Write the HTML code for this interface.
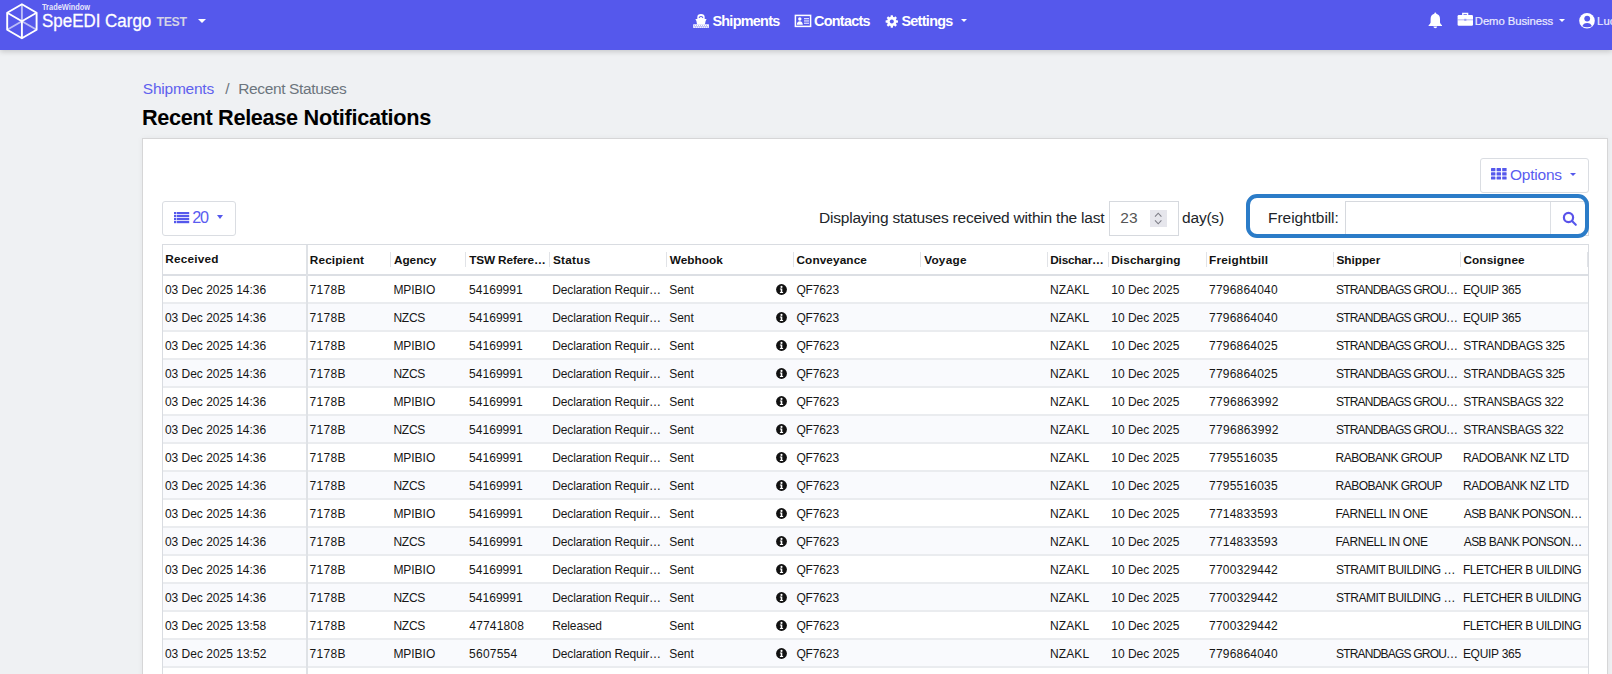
<!DOCTYPE html>
<html><head><meta charset="utf-8"><title>Recent Release Notifications</title>
<style>
*{box-sizing:border-box;margin:0;padding:0}
html,body{width:1612px;height:674px;overflow:hidden}
body{background:#eff1f3;font-family:"Liberation Sans",sans-serif;color:#212529;position:relative}
.abs{position:absolute;white-space:nowrap}
.tx{position:absolute;white-space:nowrap;line-height:1}
#nav{position:absolute;left:0;top:0;width:1612px;height:49.5px;background:#5558ec;box-shadow:0 2px 5px rgba(0,0,0,.16)}
.caret{position:absolute;width:0;height:0;border-left:4px solid transparent;border-right:4px solid transparent;border-top:4.5px solid #fff}
#card{position:absolute;left:142px;top:138px;width:1466px;height:600px;background:#fff;border:1px solid #d6d6d7;box-shadow:0 0 6px rgba(0,0,0,.05)}
.btn{position:absolute;border:1px solid #dadde2;border-radius:4px;background:#fff}
.row{position:absolute;left:162px;width:1427px;height:28px}
.rline{position:absolute;left:162px;width:1427px;height:2px;background:#eaecef}
.hdrline{position:absolute;left:162px;top:274px;width:1427px;height:2px;background:#dcdfe4}
.rs{position:absolute;top:252px;width:1px;height:15px;background:#e1e3e7}
.fzline{position:absolute;left:306px;top:244px;width:2px;height:440px;background:#dfe2e6}
.tblborder{position:absolute;left:162px;top:244px;width:1427px;height:460px;border:1px solid #d9dce1}
.info{position:absolute;left:775.6px;display:block}
</style></head><body>
<div id="nav"></div>
<svg class="abs" style="left:0;top:0" width="44" height="44" viewBox="0 0 44 44">
  <g fill="none" stroke="#fff" stroke-width="1.9" stroke-linejoin="round">
    <path d="M21.9 4.3 L36.6 12.8 L36.6 29.8 L21.9 38.3 L7.2 29.8 L7.2 12.8 Z"/>
    <path d="M21.9 21.3 L7.2 12.8 M21.9 21.3 L36.6 12.8 M21.9 21.3 L21.9 38.3"/>
    <path d="M21.9 21.3 L21.9 4.3 M21.9 21.3 L7.2 29.8 M21.9 21.3 L36.6 29.8" stroke-opacity=".6"/>
  </g>
</svg>
<div class="caret" style="left:198.2px;top:19.3px"></div>
<!-- ship icon -->
<svg class="abs" style="left:688px;top:9px" width="26" height="22" viewBox="0 0 26 22">
  <path fill="#fff" d="M9.3 10.2 L9.3 8 Q9.3 4.9 13 4.9 Q16.7 4.9 16.7 8 L16.7 10.2 Z"/>
  <path fill="#5558ec" d="M10.6 9 Q10.8 6.9 13 6.9 Q15.2 6.9 15.4 9 L14.4 9 Q14.2 7.9 13 7.9 Q11.8 7.9 11.6 9 Z"/>
  <path fill="#fff" d="M7.4 10 L18.6 10 L17.6 12 L16.9 15.4 L9.1 15.4 L8.4 12 Z"/>
  <rect x="5.2" y="15.3" width="15.7" height="3.6" fill="#fff"/>
  <g fill="#8f90f2">
    <rect x="6" y="16.4" width="1" height="1"/><rect x="8" y="16.4" width="1" height="1"/><rect x="10" y="16.4" width="1" height="1"/><rect x="12" y="16.4" width="1" height="1"/><rect x="14" y="16.4" width="1" height="1"/><rect x="16" y="16.4" width="1" height="1"/><rect x="18" y="16.4" width="1" height="1"/>
    <rect x="7" y="17.4" width="1" height="1"/><rect x="9" y="17.4" width="1" height="1"/><rect x="11" y="17.4" width="1" height="1"/><rect x="13" y="17.4" width="1" height="1"/><rect x="15" y="17.4" width="1" height="1"/><rect x="17" y="17.4" width="1" height="1"/><rect x="19" y="17.4" width="1" height="1"/>
  </g>
</svg>
<!-- contacts icon -->
<svg class="abs" style="left:794px;top:14px" width="18" height="14" viewBox="0 0 18 14">
  <rect x="1.4" y="1.4" width="15.2" height="11" fill="none" stroke="#fff" stroke-width="1.5"/>
  <circle cx="5.8" cy="5" r="1.7" fill="#fff"/>
  <path d="M2.8 10.8 Q3 7.2 5.8 7.2 Q8.6 7.2 8.8 10.8 Z" fill="#fff"/>
  <rect x="10" y="4" width="5" height="1.3" fill="#dcdcff"/>
  <rect x="10" y="6.3" width="5" height="1.3" fill="#dcdcff"/>
  <rect x="10" y="8.6" width="5" height="1.3" fill="#dcdcff"/>
</svg>
<!-- gear -->
<svg class="abs" style="left:885px;top:14.5px" width="14" height="14" viewBox="0 0 14 14">
  <g fill="#fff" transform="translate(6.8 6.5)">
    <rect x="-1.2" y="-6.2" width="2.4" height="12.4" rx=".4"/>
    <rect x="-1.2" y="-6.2" width="2.4" height="12.4" rx=".4" transform="rotate(45)"/>
    <rect x="-1.2" y="-6.2" width="2.4" height="12.4" rx=".4" transform="rotate(90)"/>
    <rect x="-1.2" y="-6.2" width="2.4" height="12.4" rx=".4" transform="rotate(135)"/>
    <circle r="4.7"/>
  </g>
  <circle cx="6.8" cy="6.5" r="2" fill="#5558ec"/>
</svg>
<div class="caret" style="left:960.5px;top:18.6px;border-left-width:3.3px;border-right-width:3.3px;border-top-width:3.8px"></div>
<!-- bell -->
<svg class="abs" style="left:1427px;top:11.5px" width="17" height="17" viewBox="0 0 17 17">
  <path fill="#fff" d="M8.3 0.6 Q9.3 0.6 9.3 1.8 Q13 2.6 13 7 L13 10.5 Q13.4 12 15 13.2 L15 14 L1.6 14 L1.6 13.2 Q3.2 12 3.6 10.5 L3.6 7 Q3.6 2.6 7.3 1.8 Q7.3 0.6 8.3 0.6 Z"/>
  <path fill="#fff" d="M6.4 14.6 L10.2 14.6 Q10 16.2 8.3 16.2 Q6.6 16.2 6.4 14.6 Z"/>
</svg>
<!-- briefcase -->
<svg class="abs" style="left:1457px;top:11.8px" width="17" height="15" viewBox="0 0 17 15">
  <path fill="none" stroke="#fff" stroke-width="1.4" d="M5.8 3.2 L5.8 1.5 L10.6 1.5 L10.6 3.2"/>
  <rect x="0.6" y="3" width="15.4" height="10.8" rx="1.2" fill="#fff"/>
  <rect x="0.6" y="7.4" width="15.4" height="0.9" fill="#5558ec" opacity=".5"/>
  <rect x="7.2" y="6.8" width="2.2" height="2" fill="#9a9cf3"/>
</svg>
<div class="caret" style="left:1558.5px;top:18.5px;border-left-width:3px;border-right-width:3px;border-top-width:3px"></div>
<!-- user circle -->
<svg class="abs" style="left:1578px;top:12px" width="18" height="18" viewBox="0 0 18 18">
  <circle cx="9" cy="8.7" r="7.8" fill="#fff"/>
  <circle cx="9.2" cy="6.6" r="2.9" fill="#5558ec"/>
  <path d="M4.3 14.3 Q5.4 10.9 9.1 10.9 Q12.8 10.9 13.9 14.3 Q11.9 15.3 9.1 15.3 Q6.3 15.3 4.3 14.3 Z" fill="#5558ec"/>
</svg>

<div id="card"></div>
<!-- options button -->
<div class="btn" style="left:1479.5px;top:158px;width:109px;height:34.5px;border-radius:3px"></div>
<svg class="abs" style="left:1491px;top:168px" width="16" height="12" viewBox="0 0 16 12">
  <g fill="#5558ec">
    <rect x="0" y="0" width="4.4" height="3.2" rx=".5"/><rect x="5.6" y="0" width="4.4" height="3.2" rx=".5"/><rect x="11.2" y="0" width="4.4" height="3.2" rx=".5"/>
    <rect x="0" y="4.2" width="4.4" height="3.2" rx=".5"/><rect x="5.6" y="4.2" width="4.4" height="3.2" rx=".5"/><rect x="11.2" y="4.2" width="4.4" height="3.2" rx=".5"/>
    <rect x="0" y="8.4" width="4.4" height="3.2" rx=".5"/><rect x="5.6" y="8.4" width="4.4" height="3.2" rx=".5"/><rect x="11.2" y="8.4" width="4.4" height="3.2" rx=".5"/>
  </g>
</svg>
<div class="caret" style="left:1569.6px;top:172.6px;border-left-width:3.3px;border-right-width:3.3px;border-top-width:3.8px;border-top-color:#5558ec"></div>
<!-- page size button -->
<div class="btn" style="left:162px;top:201px;width:74px;height:34.5px;border-radius:3px"></div>
<svg class="abs" style="left:173.5px;top:212px" width="16" height="12" viewBox="0 0 16 12">
  <g fill="#5558ec">
    <rect x="0" y="0" width="2" height="2.2"/><rect x="2.6" y="0" width="12.6" height="2.2"/>
    <rect x="0" y="3" width="2" height="2.2"/><rect x="2.6" y="3" width="12.6" height="2.2"/>
    <rect x="0" y="6" width="2" height="2.2"/><rect x="2.6" y="6" width="12.6" height="2.2"/>
    <rect x="0" y="9" width="2" height="2.2"/><rect x="2.6" y="9" width="12.6" height="2.2"/>
  </g>
</svg>
<div class="caret" style="left:217px;top:215.3px;border-left-width:3.4px;border-right-width:3.4px;border-top-width:4px;border-top-color:#5558ec"></div>
<!-- days input -->
<div class="abs" style="left:1109px;top:201px;width:70px;height:34.5px;border:1px solid #d6d9de;background:#fff"></div>
<div class="abs" style="left:1150px;top:210px;width:16.5px;height:16.5px;background:#e6e6ec"></div>
<svg class="abs" style="left:1150px;top:210px" width="17" height="17" viewBox="0 0 17 17">
  <path d="M5 6.6 L8.2 3.2 L11.4 6.6 M5 10.4 L8.2 13.8 L11.4 10.4" fill="none" stroke="#7d7d86" stroke-width="1.1"/>
</svg>
<!-- freightbill group -->
<div class="abs" style="left:1345px;top:201px;width:243.5px;height:34.5px;border:1px solid #d6d9de;background:#fff"></div>
<div class="abs" style="left:1550px;top:202px;width:1px;height:32px;background:#dcdfe4"></div>
<svg class="abs" style="left:1562px;top:210.5px" width="16" height="16" viewBox="0 0 16 16">
  <circle cx="6.5" cy="6.5" r="4.6" fill="none" stroke="#5a52ea" stroke-width="2.2"/>
  <path d="M10 10 L13.8 13.8" stroke="#5558ec" stroke-width="2.1" stroke-linecap="round"/>
</svg>
<div class="abs" style="left:1246px;top:194px;width:343px;height:44px;border:4px solid #2b7cc8;border-radius:11px"></div>

<div id="tbl">
<div class="row" style="top:304px;background:#f9fafd"></div>
<div class="row" style="top:360px;background:#f9fafd"></div>
<div class="row" style="top:416px;background:#f9fafd"></div>
<div class="row" style="top:472px;background:#f9fafd"></div>
<div class="row" style="top:528px;background:#f9fafd"></div>
<div class="row" style="top:584px;background:#f9fafd"></div>
<div class="row" style="top:640px;background:#f9fafd"></div>
<div class="rline" style="top:302px"></div>
<div class="rline" style="top:330px"></div>
<div class="rline" style="top:358px"></div>
<div class="rline" style="top:386px"></div>
<div class="rline" style="top:414px"></div>
<div class="rline" style="top:442px"></div>
<div class="rline" style="top:470px"></div>
<div class="rline" style="top:498px"></div>
<div class="rline" style="top:526px"></div>
<div class="rline" style="top:554px"></div>
<div class="rline" style="top:582px"></div>
<div class="rline" style="top:610px"></div>
<div class="rline" style="top:638px"></div>
<div class="rline" style="top:666px"></div>
<div class="rline" style="top:694px"></div>
<div class="hdrline"></div>
<div class="rs" style="left:306px"></div>
<div class="rs" style="left:390px"></div>
<div class="rs" style="left:465px"></div>
<div class="rs" style="left:549px"></div>
<div class="rs" style="left:666px"></div>
<div class="rs" style="left:793px"></div>
<div class="rs" style="left:920px"></div>
<div class="rs" style="left:1047px"></div>
<div class="rs" style="left:1108px"></div>
<div class="rs" style="left:1206px"></div>
<div class="rs" style="left:1333px"></div>
<div class="rs" style="left:1460px"></div>
<div class="rs" style="left:1587px"></div>
<div class="fzline"></div>
<div class="tblborder"></div>
<svg class="info" style="top:284px" width="11" height="11" viewBox="0 0 11 11"><circle cx="5.5" cy="5.5" r="5.4" fill="#111"/><path d="M3.9 4.5 H6.3 V7.9 H7.1 V9 H3.9 V7.9 H4.7 V5.6 H3.9 Z" fill="#fff"/><circle cx="5.5" cy="2.9" r="1.05" fill="#fff"/></svg>
<svg class="info" style="top:312px" width="11" height="11" viewBox="0 0 11 11"><circle cx="5.5" cy="5.5" r="5.4" fill="#111"/><path d="M3.9 4.5 H6.3 V7.9 H7.1 V9 H3.9 V7.9 H4.7 V5.6 H3.9 Z" fill="#fff"/><circle cx="5.5" cy="2.9" r="1.05" fill="#fff"/></svg>
<svg class="info" style="top:340px" width="11" height="11" viewBox="0 0 11 11"><circle cx="5.5" cy="5.5" r="5.4" fill="#111"/><path d="M3.9 4.5 H6.3 V7.9 H7.1 V9 H3.9 V7.9 H4.7 V5.6 H3.9 Z" fill="#fff"/><circle cx="5.5" cy="2.9" r="1.05" fill="#fff"/></svg>
<svg class="info" style="top:368px" width="11" height="11" viewBox="0 0 11 11"><circle cx="5.5" cy="5.5" r="5.4" fill="#111"/><path d="M3.9 4.5 H6.3 V7.9 H7.1 V9 H3.9 V7.9 H4.7 V5.6 H3.9 Z" fill="#fff"/><circle cx="5.5" cy="2.9" r="1.05" fill="#fff"/></svg>
<svg class="info" style="top:396px" width="11" height="11" viewBox="0 0 11 11"><circle cx="5.5" cy="5.5" r="5.4" fill="#111"/><path d="M3.9 4.5 H6.3 V7.9 H7.1 V9 H3.9 V7.9 H4.7 V5.6 H3.9 Z" fill="#fff"/><circle cx="5.5" cy="2.9" r="1.05" fill="#fff"/></svg>
<svg class="info" style="top:424px" width="11" height="11" viewBox="0 0 11 11"><circle cx="5.5" cy="5.5" r="5.4" fill="#111"/><path d="M3.9 4.5 H6.3 V7.9 H7.1 V9 H3.9 V7.9 H4.7 V5.6 H3.9 Z" fill="#fff"/><circle cx="5.5" cy="2.9" r="1.05" fill="#fff"/></svg>
<svg class="info" style="top:452px" width="11" height="11" viewBox="0 0 11 11"><circle cx="5.5" cy="5.5" r="5.4" fill="#111"/><path d="M3.9 4.5 H6.3 V7.9 H7.1 V9 H3.9 V7.9 H4.7 V5.6 H3.9 Z" fill="#fff"/><circle cx="5.5" cy="2.9" r="1.05" fill="#fff"/></svg>
<svg class="info" style="top:480px" width="11" height="11" viewBox="0 0 11 11"><circle cx="5.5" cy="5.5" r="5.4" fill="#111"/><path d="M3.9 4.5 H6.3 V7.9 H7.1 V9 H3.9 V7.9 H4.7 V5.6 H3.9 Z" fill="#fff"/><circle cx="5.5" cy="2.9" r="1.05" fill="#fff"/></svg>
<svg class="info" style="top:508px" width="11" height="11" viewBox="0 0 11 11"><circle cx="5.5" cy="5.5" r="5.4" fill="#111"/><path d="M3.9 4.5 H6.3 V7.9 H7.1 V9 H3.9 V7.9 H4.7 V5.6 H3.9 Z" fill="#fff"/><circle cx="5.5" cy="2.9" r="1.05" fill="#fff"/></svg>
<svg class="info" style="top:536px" width="11" height="11" viewBox="0 0 11 11"><circle cx="5.5" cy="5.5" r="5.4" fill="#111"/><path d="M3.9 4.5 H6.3 V7.9 H7.1 V9 H3.9 V7.9 H4.7 V5.6 H3.9 Z" fill="#fff"/><circle cx="5.5" cy="2.9" r="1.05" fill="#fff"/></svg>
<svg class="info" style="top:564px" width="11" height="11" viewBox="0 0 11 11"><circle cx="5.5" cy="5.5" r="5.4" fill="#111"/><path d="M3.9 4.5 H6.3 V7.9 H7.1 V9 H3.9 V7.9 H4.7 V5.6 H3.9 Z" fill="#fff"/><circle cx="5.5" cy="2.9" r="1.05" fill="#fff"/></svg>
<svg class="info" style="top:592px" width="11" height="11" viewBox="0 0 11 11"><circle cx="5.5" cy="5.5" r="5.4" fill="#111"/><path d="M3.9 4.5 H6.3 V7.9 H7.1 V9 H3.9 V7.9 H4.7 V5.6 H3.9 Z" fill="#fff"/><circle cx="5.5" cy="2.9" r="1.05" fill="#fff"/></svg>
<svg class="info" style="top:620px" width="11" height="11" viewBox="0 0 11 11"><circle cx="5.5" cy="5.5" r="5.4" fill="#111"/><path d="M3.9 4.5 H6.3 V7.9 H7.1 V9 H3.9 V7.9 H4.7 V5.6 H3.9 Z" fill="#fff"/><circle cx="5.5" cy="2.9" r="1.05" fill="#fff"/></svg>
<svg class="info" style="top:648px" width="11" height="11" viewBox="0 0 11 11"><circle cx="5.5" cy="5.5" r="5.4" fill="#111"/><path d="M3.9 4.5 H6.3 V7.9 H7.1 V9 H3.9 V7.9 H4.7 V5.6 H3.9 Z" fill="#fff"/><circle cx="5.5" cy="2.9" r="1.05" fill="#fff"/></svg>
<svg class="info" style="top:676px" width="11" height="11" viewBox="0 0 11 11"><circle cx="5.5" cy="5.5" r="5.4" fill="#111"/><path d="M3.9 4.5 H6.3 V7.9 H7.1 V9 H3.9 V7.9 H4.7 V5.6 H3.9 Z" fill="#fff"/><circle cx="5.5" cy="2.9" r="1.05" fill="#fff"/></svg>
</div>
<div class="tx" style="left:42.40px;top:3px;font-size:8.3px;font-weight:700;transform:scaleX(0.8939);transform-origin:-0.00px 0;color:#e6e6fb;">TradeWindow</div>
<div class="tx" style="left:41.60px;top:12px;font-size:18.5px;transform:scaleX(0.9152);transform-origin:0.80px 0;color:#fff;-webkit-text-stroke:.3px #fff;">SpeEDI Cargo</div>
<div class="tx" style="left:156.50px;top:16px;font-size:12.4px;font-weight:700;letter-spacing:-0.405px;color:#d3d3e6;">TEST</div>
<div class="tx" style="left:712.40px;top:14px;font-size:14.4px;font-weight:700;letter-spacing:-0.713px;color:#fff;">Shipments</div>
<div class="tx" style="left:814.10px;top:14px;font-size:14.4px;font-weight:700;letter-spacing:-0.743px;color:#fff;">Contacts</div>
<div class="tx" style="left:901.40px;top:14px;font-size:14.4px;font-weight:700;letter-spacing:-0.685px;color:#fff;">Settings</div>
<div class="tx" style="left:1474.80px;top:16px;font-size:11.3px;letter-spacing:-0.065px;color:#ecebff;-webkit-text-stroke:.2px #ecebff;">Demo Business</div>
<div class="tx" style="left:1597.10px;top:16px;font-size:11.3px;color:#ecebff;-webkit-text-stroke:.2px #ecebff;">Lucas</div>
<div class="tx" style="left:142.80px;top:81px;font-size:15.5px;letter-spacing:-0.235px;color:#5f61ee;">Shipments</div>
<div class="tx" style="left:225.30px;top:81px;font-size:15.5px;color:#6c757d;">/</div>
<div class="tx" style="left:238.30px;top:81px;font-size:15.5px;letter-spacing:-0.370px;color:#6c757d;">Recent Statuses</div>
<div class="tx" style="left:141.90px;top:107px;font-size:21.7px;font-weight:700;letter-spacing:-0.311px;color:#000;">Recent Release Notifications</div>
<div class="tx" style="left:1510.00px;top:167px;font-size:15.5px;letter-spacing:-0.228px;color:#5a5cf0;">Options</div>
<div class="tx" style="left:192.20px;top:209px;font-size:16.2px;letter-spacing:-1.210px;color:#5a5cf0;">20</div>
<div class="tx" style="left:819.00px;top:210px;font-size:15.5px;letter-spacing:-0.212px;color:#212529;">Displaying statuses received within the last</div>
<div class="tx" style="left:1120.20px;top:210px;font-size:15.5px;letter-spacing:0.280px;color:#555;">23</div>
<div class="tx" style="left:1182.10px;top:210px;font-size:15.5px;letter-spacing:-0.220px;color:#212529;">day(s)</div>
<div class="tx" style="left:1268.10px;top:210px;font-size:15.5px;letter-spacing:-0.072px;color:#212529;">Freightbill:</div>
<div class="tx" style="left:165.30px;top:254px;font-size:11.8px;font-weight:700;letter-spacing:0.184px;color:#111;">Received</div>
<div class="tx" style="left:309.80px;top:255px;font-size:11.8px;font-weight:700;letter-spacing:0.127px;color:#111;">Recipient</div>
<div class="tx" style="left:394.00px;top:255px;font-size:11.8px;font-weight:700;letter-spacing:-0.053px;color:#111;">Agency</div>
<div class="tx" style="left:469.20px;top:255px;font-size:11.8px;font-weight:700;letter-spacing:-0.143px;color:#111;">TSW Refere…</div>
<div class="tx" style="left:553.00px;top:255px;font-size:11.8px;font-weight:700;letter-spacing:0.240px;color:#111;">Status</div>
<div class="tx" style="left:669.80px;top:255px;font-size:11.8px;font-weight:700;letter-spacing:0.014px;color:#111;">Webhook</div>
<div class="tx" style="left:796.50px;top:255px;font-size:11.8px;font-weight:700;letter-spacing:0.094px;color:#111;">Conveyance</div>
<div class="tx" style="left:924.20px;top:255px;font-size:11.8px;font-weight:700;letter-spacing:0.233px;color:#111;">Voyage</div>
<div class="tx" style="left:1050.30px;top:255px;font-size:11.8px;font-weight:700;letter-spacing:-0.213px;color:#111;">Dischar…</div>
<div class="tx" style="left:1111.20px;top:255px;font-size:11.8px;font-weight:700;letter-spacing:0.112px;color:#111;">Discharging</div>
<div class="tx" style="left:1209.10px;top:255px;font-size:11.8px;font-weight:700;letter-spacing:0.195px;color:#111;">Freightbill</div>
<div class="tx" style="left:1336.40px;top:255px;font-size:11.8px;font-weight:700;letter-spacing:-0.006px;color:#111;">Shipper</div>
<div class="tx" style="left:1463.40px;top:255px;font-size:11.8px;font-weight:700;letter-spacing:0.118px;color:#111;">Consignee</div>
<div class="tx" style="left:164.90px;top:284px;font-size:12.0px;letter-spacing:-0.009px;color:#161616;">03 Dec 2025 14:36</div>
<div class="tx" style="left:309.60px;top:284px;font-size:12.0px;letter-spacing:0.326px;color:#161616;">7178B</div>
<div class="tx" style="left:393.40px;top:284px;font-size:12.0px;letter-spacing:-0.034px;color:#161616;">MPIBIO</div>
<div class="tx" style="left:469.10px;top:284px;font-size:12.0px;letter-spacing:0.026px;color:#161616;">54169991</div>
<div class="tx" style="left:552.30px;top:284px;font-size:12.0px;letter-spacing:-0.149px;color:#161616;">Declaration Requir…</div>
<div class="tx" style="left:669.20px;top:284px;font-size:12.0px;letter-spacing:-0.017px;color:#161616;">Sent</div>
<div class="tx" style="left:796.40px;top:284px;font-size:12.0px;letter-spacing:-0.137px;color:#161616;">QF7623</div>
<div class="tx" style="left:1050.00px;top:284px;font-size:12.0px;letter-spacing:0.099px;color:#161616;">NZAKL</div>
<div class="tx" style="left:1111.20px;top:284px;font-size:12.0px;letter-spacing:0.022px;color:#161616;">10 Dec 2025</div>
<div class="tx" style="left:1209.10px;top:284px;font-size:12.0px;letter-spacing:0.193px;color:#161616;">7796864040</div>
<div class="tx" style="left:1336.00px;top:284px;font-size:12.0px;letter-spacing:-0.794px;color:#161616;">STRANDBAGS GROU…</div>
<div class="tx" style="left:1462.90px;top:284px;font-size:12.0px;letter-spacing:-0.278px;color:#161616;">EQUIP 365</div>
<div class="tx" style="left:164.90px;top:312px;font-size:12.0px;letter-spacing:-0.009px;color:#161616;">03 Dec 2025 14:36</div>
<div class="tx" style="left:309.60px;top:312px;font-size:12.0px;letter-spacing:0.326px;color:#161616;">7178B</div>
<div class="tx" style="left:393.40px;top:312px;font-size:12.0px;letter-spacing:-0.254px;color:#161616;">NZCS</div>
<div class="tx" style="left:469.10px;top:312px;font-size:12.0px;letter-spacing:0.026px;color:#161616;">54169991</div>
<div class="tx" style="left:552.30px;top:312px;font-size:12.0px;letter-spacing:-0.149px;color:#161616;">Declaration Requir…</div>
<div class="tx" style="left:669.20px;top:312px;font-size:12.0px;letter-spacing:-0.017px;color:#161616;">Sent</div>
<div class="tx" style="left:796.40px;top:312px;font-size:12.0px;letter-spacing:-0.137px;color:#161616;">QF7623</div>
<div class="tx" style="left:1050.00px;top:312px;font-size:12.0px;letter-spacing:0.099px;color:#161616;">NZAKL</div>
<div class="tx" style="left:1111.20px;top:312px;font-size:12.0px;letter-spacing:0.022px;color:#161616;">10 Dec 2025</div>
<div class="tx" style="left:1209.10px;top:312px;font-size:12.0px;letter-spacing:0.193px;color:#161616;">7796864040</div>
<div class="tx" style="left:1336.00px;top:312px;font-size:12.0px;letter-spacing:-0.794px;color:#161616;">STRANDBAGS GROU…</div>
<div class="tx" style="left:1462.90px;top:312px;font-size:12.0px;letter-spacing:-0.278px;color:#161616;">EQUIP 365</div>
<div class="tx" style="left:164.90px;top:340px;font-size:12.0px;letter-spacing:-0.009px;color:#161616;">03 Dec 2025 14:36</div>
<div class="tx" style="left:309.60px;top:340px;font-size:12.0px;letter-spacing:0.326px;color:#161616;">7178B</div>
<div class="tx" style="left:393.40px;top:340px;font-size:12.0px;letter-spacing:-0.034px;color:#161616;">MPIBIO</div>
<div class="tx" style="left:469.10px;top:340px;font-size:12.0px;letter-spacing:0.026px;color:#161616;">54169991</div>
<div class="tx" style="left:552.30px;top:340px;font-size:12.0px;letter-spacing:-0.149px;color:#161616;">Declaration Requir…</div>
<div class="tx" style="left:669.20px;top:340px;font-size:12.0px;letter-spacing:-0.017px;color:#161616;">Sent</div>
<div class="tx" style="left:796.40px;top:340px;font-size:12.0px;letter-spacing:-0.137px;color:#161616;">QF7623</div>
<div class="tx" style="left:1050.00px;top:340px;font-size:12.0px;letter-spacing:0.099px;color:#161616;">NZAKL</div>
<div class="tx" style="left:1111.20px;top:340px;font-size:12.0px;letter-spacing:0.022px;color:#161616;">10 Dec 2025</div>
<div class="tx" style="left:1209.10px;top:340px;font-size:12.0px;letter-spacing:0.204px;color:#161616;">7796864025</div>
<div class="tx" style="left:1336.00px;top:340px;font-size:12.0px;letter-spacing:-0.794px;color:#161616;">STRANDBAGS GROU…</div>
<div class="tx" style="left:1463.30px;top:340px;font-size:12.0px;letter-spacing:-0.336px;color:#161616;">STRANDBAGS 325</div>
<div class="tx" style="left:164.90px;top:368px;font-size:12.0px;letter-spacing:-0.009px;color:#161616;">03 Dec 2025 14:36</div>
<div class="tx" style="left:309.60px;top:368px;font-size:12.0px;letter-spacing:0.326px;color:#161616;">7178B</div>
<div class="tx" style="left:393.40px;top:368px;font-size:12.0px;letter-spacing:-0.254px;color:#161616;">NZCS</div>
<div class="tx" style="left:469.10px;top:368px;font-size:12.0px;letter-spacing:0.026px;color:#161616;">54169991</div>
<div class="tx" style="left:552.30px;top:368px;font-size:12.0px;letter-spacing:-0.149px;color:#161616;">Declaration Requir…</div>
<div class="tx" style="left:669.20px;top:368px;font-size:12.0px;letter-spacing:-0.017px;color:#161616;">Sent</div>
<div class="tx" style="left:796.40px;top:368px;font-size:12.0px;letter-spacing:-0.137px;color:#161616;">QF7623</div>
<div class="tx" style="left:1050.00px;top:368px;font-size:12.0px;letter-spacing:0.099px;color:#161616;">NZAKL</div>
<div class="tx" style="left:1111.20px;top:368px;font-size:12.0px;letter-spacing:0.022px;color:#161616;">10 Dec 2025</div>
<div class="tx" style="left:1209.10px;top:368px;font-size:12.0px;letter-spacing:0.204px;color:#161616;">7796864025</div>
<div class="tx" style="left:1336.00px;top:368px;font-size:12.0px;letter-spacing:-0.794px;color:#161616;">STRANDBAGS GROU…</div>
<div class="tx" style="left:1463.30px;top:368px;font-size:12.0px;letter-spacing:-0.336px;color:#161616;">STRANDBAGS 325</div>
<div class="tx" style="left:164.90px;top:396px;font-size:12.0px;letter-spacing:-0.009px;color:#161616;">03 Dec 2025 14:36</div>
<div class="tx" style="left:309.60px;top:396px;font-size:12.0px;letter-spacing:0.326px;color:#161616;">7178B</div>
<div class="tx" style="left:393.40px;top:396px;font-size:12.0px;letter-spacing:-0.034px;color:#161616;">MPIBIO</div>
<div class="tx" style="left:469.10px;top:396px;font-size:12.0px;letter-spacing:0.026px;color:#161616;">54169991</div>
<div class="tx" style="left:552.30px;top:396px;font-size:12.0px;letter-spacing:-0.149px;color:#161616;">Declaration Requir…</div>
<div class="tx" style="left:669.20px;top:396px;font-size:12.0px;letter-spacing:-0.017px;color:#161616;">Sent</div>
<div class="tx" style="left:796.40px;top:396px;font-size:12.0px;letter-spacing:-0.137px;color:#161616;">QF7623</div>
<div class="tx" style="left:1050.00px;top:396px;font-size:12.0px;letter-spacing:0.099px;color:#161616;">NZAKL</div>
<div class="tx" style="left:1111.20px;top:396px;font-size:12.0px;letter-spacing:0.022px;color:#161616;">10 Dec 2025</div>
<div class="tx" style="left:1209.10px;top:396px;font-size:12.0px;letter-spacing:0.282px;color:#161616;">7796863992</div>
<div class="tx" style="left:1336.00px;top:396px;font-size:12.0px;letter-spacing:-0.794px;color:#161616;">STRANDBAGS GROU…</div>
<div class="tx" style="left:1463.30px;top:396px;font-size:12.0px;letter-spacing:-0.385px;color:#161616;">STRANSBAGS 322</div>
<div class="tx" style="left:164.90px;top:424px;font-size:12.0px;letter-spacing:-0.009px;color:#161616;">03 Dec 2025 14:36</div>
<div class="tx" style="left:309.60px;top:424px;font-size:12.0px;letter-spacing:0.326px;color:#161616;">7178B</div>
<div class="tx" style="left:393.40px;top:424px;font-size:12.0px;letter-spacing:-0.254px;color:#161616;">NZCS</div>
<div class="tx" style="left:469.10px;top:424px;font-size:12.0px;letter-spacing:0.026px;color:#161616;">54169991</div>
<div class="tx" style="left:552.30px;top:424px;font-size:12.0px;letter-spacing:-0.149px;color:#161616;">Declaration Requir…</div>
<div class="tx" style="left:669.20px;top:424px;font-size:12.0px;letter-spacing:-0.017px;color:#161616;">Sent</div>
<div class="tx" style="left:796.40px;top:424px;font-size:12.0px;letter-spacing:-0.137px;color:#161616;">QF7623</div>
<div class="tx" style="left:1050.00px;top:424px;font-size:12.0px;letter-spacing:0.099px;color:#161616;">NZAKL</div>
<div class="tx" style="left:1111.20px;top:424px;font-size:12.0px;letter-spacing:0.022px;color:#161616;">10 Dec 2025</div>
<div class="tx" style="left:1209.10px;top:424px;font-size:12.0px;letter-spacing:0.282px;color:#161616;">7796863992</div>
<div class="tx" style="left:1336.00px;top:424px;font-size:12.0px;letter-spacing:-0.794px;color:#161616;">STRANDBAGS GROU…</div>
<div class="tx" style="left:1463.30px;top:424px;font-size:12.0px;letter-spacing:-0.385px;color:#161616;">STRANSBAGS 322</div>
<div class="tx" style="left:164.90px;top:452px;font-size:12.0px;letter-spacing:-0.009px;color:#161616;">03 Dec 2025 14:36</div>
<div class="tx" style="left:309.60px;top:452px;font-size:12.0px;letter-spacing:0.326px;color:#161616;">7178B</div>
<div class="tx" style="left:393.40px;top:452px;font-size:12.0px;letter-spacing:-0.034px;color:#161616;">MPIBIO</div>
<div class="tx" style="left:469.10px;top:452px;font-size:12.0px;letter-spacing:0.026px;color:#161616;">54169991</div>
<div class="tx" style="left:552.30px;top:452px;font-size:12.0px;letter-spacing:-0.149px;color:#161616;">Declaration Requir…</div>
<div class="tx" style="left:669.20px;top:452px;font-size:12.0px;letter-spacing:-0.017px;color:#161616;">Sent</div>
<div class="tx" style="left:796.40px;top:452px;font-size:12.0px;letter-spacing:-0.137px;color:#161616;">QF7623</div>
<div class="tx" style="left:1050.00px;top:452px;font-size:12.0px;letter-spacing:0.099px;color:#161616;">NZAKL</div>
<div class="tx" style="left:1111.20px;top:452px;font-size:12.0px;letter-spacing:0.022px;color:#161616;">10 Dec 2025</div>
<div class="tx" style="left:1209.10px;top:452px;font-size:12.0px;letter-spacing:0.204px;color:#161616;">7795516035</div>
<div class="tx" style="left:1335.60px;top:452px;font-size:12.0px;letter-spacing:-0.540px;color:#161616;">RABOBANK GROUP</div>
<div class="tx" style="left:1462.90px;top:452px;font-size:12.0px;letter-spacing:-0.387px;color:#161616;">RADOBANK NZ LTD</div>
<div class="tx" style="left:164.90px;top:480px;font-size:12.0px;letter-spacing:-0.009px;color:#161616;">03 Dec 2025 14:36</div>
<div class="tx" style="left:309.60px;top:480px;font-size:12.0px;letter-spacing:0.326px;color:#161616;">7178B</div>
<div class="tx" style="left:393.40px;top:480px;font-size:12.0px;letter-spacing:-0.254px;color:#161616;">NZCS</div>
<div class="tx" style="left:469.10px;top:480px;font-size:12.0px;letter-spacing:0.026px;color:#161616;">54169991</div>
<div class="tx" style="left:552.30px;top:480px;font-size:12.0px;letter-spacing:-0.149px;color:#161616;">Declaration Requir…</div>
<div class="tx" style="left:669.20px;top:480px;font-size:12.0px;letter-spacing:-0.017px;color:#161616;">Sent</div>
<div class="tx" style="left:796.40px;top:480px;font-size:12.0px;letter-spacing:-0.137px;color:#161616;">QF7623</div>
<div class="tx" style="left:1050.00px;top:480px;font-size:12.0px;letter-spacing:0.099px;color:#161616;">NZAKL</div>
<div class="tx" style="left:1111.20px;top:480px;font-size:12.0px;letter-spacing:0.022px;color:#161616;">10 Dec 2025</div>
<div class="tx" style="left:1209.10px;top:480px;font-size:12.0px;letter-spacing:0.204px;color:#161616;">7795516035</div>
<div class="tx" style="left:1335.60px;top:480px;font-size:12.0px;letter-spacing:-0.540px;color:#161616;">RABOBANK GROUP</div>
<div class="tx" style="left:1462.90px;top:480px;font-size:12.0px;letter-spacing:-0.387px;color:#161616;">RADOBANK NZ LTD</div>
<div class="tx" style="left:164.90px;top:508px;font-size:12.0px;letter-spacing:-0.009px;color:#161616;">03 Dec 2025 14:36</div>
<div class="tx" style="left:309.60px;top:508px;font-size:12.0px;letter-spacing:0.326px;color:#161616;">7178B</div>
<div class="tx" style="left:393.40px;top:508px;font-size:12.0px;letter-spacing:-0.034px;color:#161616;">MPIBIO</div>
<div class="tx" style="left:469.10px;top:508px;font-size:12.0px;letter-spacing:0.026px;color:#161616;">54169991</div>
<div class="tx" style="left:552.30px;top:508px;font-size:12.0px;letter-spacing:-0.149px;color:#161616;">Declaration Requir…</div>
<div class="tx" style="left:669.20px;top:508px;font-size:12.0px;letter-spacing:-0.017px;color:#161616;">Sent</div>
<div class="tx" style="left:796.40px;top:508px;font-size:12.0px;letter-spacing:-0.137px;color:#161616;">QF7623</div>
<div class="tx" style="left:1050.00px;top:508px;font-size:12.0px;letter-spacing:0.099px;color:#161616;">NZAKL</div>
<div class="tx" style="left:1111.20px;top:508px;font-size:12.0px;letter-spacing:0.022px;color:#161616;">10 Dec 2025</div>
<div class="tx" style="left:1209.10px;top:508px;font-size:12.0px;letter-spacing:0.204px;color:#161616;">7714833593</div>
<div class="tx" style="left:1335.60px;top:508px;font-size:12.0px;letter-spacing:-0.402px;color:#161616;">FARNELL IN ONE</div>
<div class="tx" style="left:1463.80px;top:508px;font-size:12.0px;letter-spacing:-0.591px;color:#161616;">ASB BANK PONSON…</div>
<div class="tx" style="left:164.90px;top:536px;font-size:12.0px;letter-spacing:-0.009px;color:#161616;">03 Dec 2025 14:36</div>
<div class="tx" style="left:309.60px;top:536px;font-size:12.0px;letter-spacing:0.326px;color:#161616;">7178B</div>
<div class="tx" style="left:393.40px;top:536px;font-size:12.0px;letter-spacing:-0.254px;color:#161616;">NZCS</div>
<div class="tx" style="left:469.10px;top:536px;font-size:12.0px;letter-spacing:0.026px;color:#161616;">54169991</div>
<div class="tx" style="left:552.30px;top:536px;font-size:12.0px;letter-spacing:-0.149px;color:#161616;">Declaration Requir…</div>
<div class="tx" style="left:669.20px;top:536px;font-size:12.0px;letter-spacing:-0.017px;color:#161616;">Sent</div>
<div class="tx" style="left:796.40px;top:536px;font-size:12.0px;letter-spacing:-0.137px;color:#161616;">QF7623</div>
<div class="tx" style="left:1050.00px;top:536px;font-size:12.0px;letter-spacing:0.099px;color:#161616;">NZAKL</div>
<div class="tx" style="left:1111.20px;top:536px;font-size:12.0px;letter-spacing:0.022px;color:#161616;">10 Dec 2025</div>
<div class="tx" style="left:1209.10px;top:536px;font-size:12.0px;letter-spacing:0.204px;color:#161616;">7714833593</div>
<div class="tx" style="left:1335.60px;top:536px;font-size:12.0px;letter-spacing:-0.402px;color:#161616;">FARNELL IN ONE</div>
<div class="tx" style="left:1463.80px;top:536px;font-size:12.0px;letter-spacing:-0.591px;color:#161616;">ASB BANK PONSON…</div>
<div class="tx" style="left:164.90px;top:564px;font-size:12.0px;letter-spacing:-0.009px;color:#161616;">03 Dec 2025 14:36</div>
<div class="tx" style="left:309.60px;top:564px;font-size:12.0px;letter-spacing:0.326px;color:#161616;">7178B</div>
<div class="tx" style="left:393.40px;top:564px;font-size:12.0px;letter-spacing:-0.034px;color:#161616;">MPIBIO</div>
<div class="tx" style="left:469.10px;top:564px;font-size:12.0px;letter-spacing:0.026px;color:#161616;">54169991</div>
<div class="tx" style="left:552.30px;top:564px;font-size:12.0px;letter-spacing:-0.149px;color:#161616;">Declaration Requir…</div>
<div class="tx" style="left:669.20px;top:564px;font-size:12.0px;letter-spacing:-0.017px;color:#161616;">Sent</div>
<div class="tx" style="left:796.40px;top:564px;font-size:12.0px;letter-spacing:-0.137px;color:#161616;">QF7623</div>
<div class="tx" style="left:1050.00px;top:564px;font-size:12.0px;letter-spacing:0.099px;color:#161616;">NZAKL</div>
<div class="tx" style="left:1111.20px;top:564px;font-size:12.0px;letter-spacing:0.022px;color:#161616;">10 Dec 2025</div>
<div class="tx" style="left:1209.10px;top:564px;font-size:12.0px;letter-spacing:0.215px;color:#161616;">7700329442</div>
<div class="tx" style="left:1336.00px;top:564px;font-size:12.0px;letter-spacing:-0.489px;color:#161616;">STRAMIT BUILDING …</div>
<div class="tx" style="left:1462.90px;top:564px;font-size:12.0px;letter-spacing:-0.474px;color:#161616;">FLETCHER B UILDING</div>
<div class="tx" style="left:164.90px;top:592px;font-size:12.0px;letter-spacing:-0.009px;color:#161616;">03 Dec 2025 14:36</div>
<div class="tx" style="left:309.60px;top:592px;font-size:12.0px;letter-spacing:0.326px;color:#161616;">7178B</div>
<div class="tx" style="left:393.40px;top:592px;font-size:12.0px;letter-spacing:-0.254px;color:#161616;">NZCS</div>
<div class="tx" style="left:469.10px;top:592px;font-size:12.0px;letter-spacing:0.026px;color:#161616;">54169991</div>
<div class="tx" style="left:552.30px;top:592px;font-size:12.0px;letter-spacing:-0.149px;color:#161616;">Declaration Requir…</div>
<div class="tx" style="left:669.20px;top:592px;font-size:12.0px;letter-spacing:-0.017px;color:#161616;">Sent</div>
<div class="tx" style="left:796.40px;top:592px;font-size:12.0px;letter-spacing:-0.137px;color:#161616;">QF7623</div>
<div class="tx" style="left:1050.00px;top:592px;font-size:12.0px;letter-spacing:0.099px;color:#161616;">NZAKL</div>
<div class="tx" style="left:1111.20px;top:592px;font-size:12.0px;letter-spacing:0.022px;color:#161616;">10 Dec 2025</div>
<div class="tx" style="left:1209.10px;top:592px;font-size:12.0px;letter-spacing:0.215px;color:#161616;">7700329442</div>
<div class="tx" style="left:1336.00px;top:592px;font-size:12.0px;letter-spacing:-0.489px;color:#161616;">STRAMIT BUILDING …</div>
<div class="tx" style="left:1462.90px;top:592px;font-size:12.0px;letter-spacing:-0.474px;color:#161616;">FLETCHER B UILDING</div>
<div class="tx" style="left:164.90px;top:620px;font-size:12.0px;letter-spacing:-0.009px;color:#161616;">03 Dec 2025 13:58</div>
<div class="tx" style="left:309.60px;top:620px;font-size:12.0px;letter-spacing:0.326px;color:#161616;">7178B</div>
<div class="tx" style="left:393.40px;top:620px;font-size:12.0px;letter-spacing:-0.254px;color:#161616;">NZCS</div>
<div class="tx" style="left:469.30px;top:620px;font-size:12.0px;letter-spacing:0.169px;color:#161616;">47741808</div>
<div class="tx" style="left:552.30px;top:620px;font-size:12.0px;letter-spacing:-0.147px;color:#161616;">Released</div>
<div class="tx" style="left:669.20px;top:620px;font-size:12.0px;letter-spacing:-0.017px;color:#161616;">Sent</div>
<div class="tx" style="left:796.40px;top:620px;font-size:12.0px;letter-spacing:-0.137px;color:#161616;">QF7623</div>
<div class="tx" style="left:1050.00px;top:620px;font-size:12.0px;letter-spacing:0.099px;color:#161616;">NZAKL</div>
<div class="tx" style="left:1111.20px;top:620px;font-size:12.0px;letter-spacing:0.022px;color:#161616;">10 Dec 2025</div>
<div class="tx" style="left:1209.10px;top:620px;font-size:12.0px;letter-spacing:0.215px;color:#161616;">7700329442</div>
<div class="tx" style="left:1462.90px;top:620px;font-size:12.0px;letter-spacing:-0.474px;color:#161616;">FLETCHER B UILDING</div>
<div class="tx" style="left:164.90px;top:648px;font-size:12.0px;color:#161616;">03 Dec 2025 13:52</div>
<div class="tx" style="left:309.60px;top:648px;font-size:12.0px;letter-spacing:0.326px;color:#161616;">7178B</div>
<div class="tx" style="left:393.40px;top:648px;font-size:12.0px;letter-spacing:-0.034px;color:#161616;">MPIBIO</div>
<div class="tx" style="left:469.10px;top:648px;font-size:12.0px;letter-spacing:0.226px;color:#161616;">5607554</div>
<div class="tx" style="left:552.30px;top:648px;font-size:12.0px;letter-spacing:-0.149px;color:#161616;">Declaration Requir…</div>
<div class="tx" style="left:669.20px;top:648px;font-size:12.0px;letter-spacing:-0.017px;color:#161616;">Sent</div>
<div class="tx" style="left:796.40px;top:648px;font-size:12.0px;letter-spacing:-0.137px;color:#161616;">QF7623</div>
<div class="tx" style="left:1050.00px;top:648px;font-size:12.0px;letter-spacing:0.099px;color:#161616;">NZAKL</div>
<div class="tx" style="left:1111.20px;top:648px;font-size:12.0px;letter-spacing:0.022px;color:#161616;">10 Dec 2025</div>
<div class="tx" style="left:1209.10px;top:648px;font-size:12.0px;letter-spacing:0.193px;color:#161616;">7796864040</div>
<div class="tx" style="left:1336.00px;top:648px;font-size:12.0px;letter-spacing:-0.794px;color:#161616;">STRANDBAGS GROU…</div>
<div class="tx" style="left:1462.90px;top:648px;font-size:12.0px;letter-spacing:-0.278px;color:#161616;">EQUIP 365</div>
<div class="tx" style="left:164.90px;top:676px;font-size:12.0px;letter-spacing:-0.015px;color:#161616;">03 Dec 2025 13:40</div>
<div class="tx" style="left:309.60px;top:676px;font-size:12.0px;letter-spacing:0.326px;color:#161616;">7178B</div>
<div class="tx" style="left:393.40px;top:676px;font-size:12.0px;letter-spacing:-0.034px;color:#161616;">MPIBIO</div>
<div class="tx" style="left:469.10px;top:676px;font-size:12.0px;letter-spacing:0.226px;color:#161616;">5607554</div>
<div class="tx" style="left:552.30px;top:676px;font-size:12.0px;letter-spacing:-0.149px;color:#161616;">Declaration Requir…</div>
<div class="tx" style="left:669.20px;top:676px;font-size:12.0px;letter-spacing:-0.017px;color:#161616;">Sent</div>
<div class="tx" style="left:796.40px;top:676px;font-size:12.0px;letter-spacing:-0.137px;color:#161616;">QF7623</div>
<div class="tx" style="left:1050.00px;top:676px;font-size:12.0px;letter-spacing:0.099px;color:#161616;">NZAKL</div>
<div class="tx" style="left:1111.20px;top:676px;font-size:12.0px;letter-spacing:0.022px;color:#161616;">10 Dec 2025</div>
<div class="tx" style="left:1209.10px;top:676px;font-size:12.0px;letter-spacing:0.193px;color:#161616;">7796864040</div>
<div class="tx" style="left:1336.00px;top:676px;font-size:12.0px;letter-spacing:-0.794px;color:#161616;">STRANDBAGS GROU…</div>
<div class="tx" style="left:1462.90px;top:676px;font-size:12.0px;letter-spacing:-0.278px;color:#161616;">EQUIP 365</div>
</body></html>
